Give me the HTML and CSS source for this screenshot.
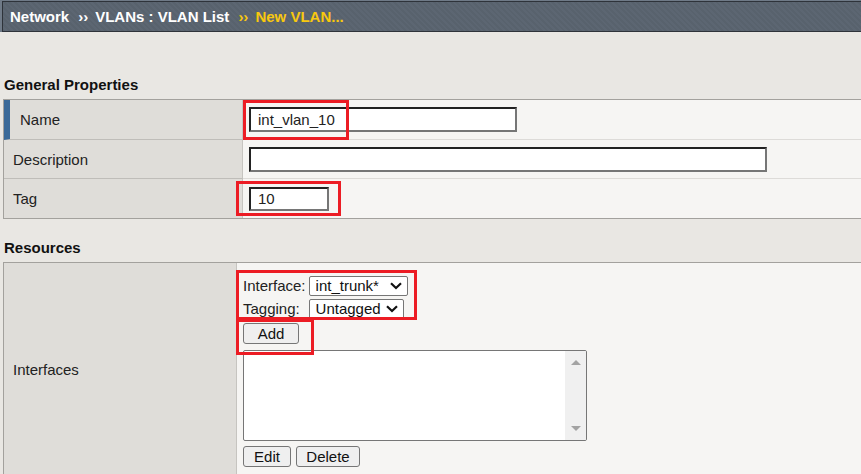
FILE: index.html
```html
<!DOCTYPE html>
<html>
<head>
<meta charset="utf-8">
<link rel="stylesheet" href="styles.css">
</head>
<body>
<div class="topbar">
  <div class="crumbs">
    <span class="crumb">Network</span><span class="sep">››</span><span class="crumb">VLANs : VLAN List</span><span class="sep cur">››</span><span class="crumb cur">New VLAN...</span>
  </div>
</div>

<h2 class="section first">General Properties</h2>
<div class="props">
  <div class="row r1">
    <div class="label active">Name</div>
    <div class="field"><input class="text w-name" type="text" value="int_vlan_10"></div>
  </div>
  <div class="row">
    <div class="label">Description</div>
    <div class="field"><input class="text w-desc" type="text" value=""></div>
  </div>
  <div class="row last">
    <div class="label">Tag</div>
    <div class="field"><input class="text w-tag" type="text" value="10"></div>
  </div>
</div>

<h2 class="section">Resources</h2>
<div class="props res">
  <div class="row tall">
    <div class="label">Interfaces</div>
    <div class="field stack">
      <div class="pairs">
        <span class="lbl">Interface:</span>
        <span class="sel w-if"><select><option>int_trunk*</option></select><svg class="chev" viewBox="0 0 12 8" width="12" height="8"><path d="M1 1.2 L6 6 L11 1.2" fill="none" stroke="#111" stroke-width="2.2"/></svg></span>
        <span class="lbl">Tagging:</span>
        <span class="sel w-tg"><select><option>Untagged</option></select><svg class="chev" viewBox="0 0 12 8" width="12" height="8"><path d="M1 1.2 L6 6 L11 1.2" fill="none" stroke="#111" stroke-width="2.2"/></svg></span>
      </div>
      <div><button class="btn w-add">Add</button></div>
      <div class="listbox">
        <div class="list-body"></div>
        <div class="scroll"><span class="tri up"></span><span class="tri down"></span></div>
      </div>
      <div class="btnrow"><button class="btn w-edit">Edit</button><button class="btn w-del">Delete</button></div>
    </div>
  </div>
</div>

<div class="mark m-name"></div>
<div class="mark m-tag"></div>
<div class="mark m-if"></div>
<div class="mark m-add"></div>
</body>
</html>
```

FILE: styles.css
```css
html, body {
  margin: 0;
  padding: 0;
}
body {
  background: #e9e7e3;
  font-family: "Liberation Sans", Arial, sans-serif;
  font-size: 15px;
  color: #222;
  overflow: hidden;
  height: 474px;
}
.topbar {
  background: #6f7a87;
  padding: 1px 0 0 2px;
}
.crumbs {
  height: 29px;
  border-top: 1px solid #2e333a;
  border-bottom: 1px solid #2e333a;
  border-left: 1px solid #2e333a;
  background: repeating-linear-gradient(45deg, #58626d 0 2px, #5c6672 2px 4px);
  display: flex;
  align-items: center;
  padding-left: 7px;
  font-weight: bold;
  font-size: 15px;
  color: #fff;
}
.crumb { color: #fff; }
.sep {
  color: #fff;
  margin: 0 7px 0 9px;
  font-size: 15px;
}
.cur { color: #f8c80f; }

.section {
  margin: 45px 0 6px 0;
  padding-left: 4px;
  font-size: 15px;
  line-height: 16px;
  font-weight: bold;
  color: #111;
}
.section:not(.first) {
  margin-top: 21px;
}

.props {
  margin-left: 3px;
  border-top: 1px solid #a3a19d;
  border-bottom: 1px solid #a3a19d;
  border-left: 1px solid #a3a19d;
}
.props.res { border-bottom: none; }
.row {
  display: grid;
  grid-template-columns: 239px 1fr;
  height: 39px;
}
.row.r1 { height: 40px; }
.label {
  background: #dfddd9;
  border-right: 1px solid #c6c4c0;
  border-bottom: 1px solid #bfbdb9;
  box-sizing: border-box;
  padding-left: 9px;
  display: flex;
  align-items: center;
}
.label.active {
  border-left: 6px solid #3b6a99;
  padding-left: 10px;
}
.field {
  background: #f6f5f3;
  border-bottom: 1px solid #dddbd8;
  box-sizing: border-box;
  padding-left: 6px;
  display: flex;
  align-items: center;
}
.row.last .label, .row.last .field { border-bottom: none; }

.text {
  box-sizing: border-box;
  height: 25px;
  border-style: solid;
  border-width: 2px;
  border-color: #222 #767676 #767676 #222;
  background: #fff;
  font-family: "Liberation Sans", Arial, sans-serif;
  font-size: 15px;
  color: #222;
  padding: 0 0 0 7px;
  margin: 0;
  outline: none;
}
.w-name { width: 268px; }
.w-desc { width: 518px; }
.w-tag { width: 80px; height: 24px; }

/* resources */
.res .row.tall {
  height: auto;
  grid-template-columns: 233px 1fr;
}
.res .label { border-bottom: none; }
.res .field { border-bottom: none; }
.stack {
  flex-direction: column;
  align-items: flex-start;
  padding: 13px 0 8px 6px;
  gap: 0;
}
.pairs {
  display: grid;
  grid-template-columns: auto auto;
  column-gap: 3px;
  row-gap: 3px;
  align-items: center;
  justify-items: start;
  font-size: 15px;
  line-height: 20px;
}
.lbl { color: #222; }
.sel {
  position: relative;
  display: block;
}
.sel select {
  appearance: none;
  -webkit-appearance: none;
  display: block;
  box-sizing: border-box;
  height: 20px;
  border: 1px solid #767676;
  border-radius: 2px;
  background: #fff;
  font-family: "Liberation Sans", Arial, sans-serif;
  font-size: 15px;
  color: #111;
  padding: 0 0 0 6px;
  margin: 0;
  line-height: 18px;
}
.w-if select { width: 99px; }
.w-tg select { width: 95px; }
.chev {
  position: absolute;
  right: 6px;
  top: 6px;
  pointer-events: none;
}
.btn {
  box-sizing: border-box;
  height: 21px;
  background: #efefef;
  border: 1px solid #767676;
  border-radius: 3px;
  font-family: "Liberation Sans", Arial, sans-serif;
  font-size: 15px;
  color: #111;
  padding: 0;
  margin: 0;
}
.w-add { width: 56px; margin-top: 4px; }
.listbox {
  margin-top: 6px;
  width: 344px;
  height: 91px;
  box-sizing: border-box;
  border: 1px solid #767676;
  border-radius: 2px;
  background: #fff;
  display: flex;
  overflow: hidden;
}
.list-body { flex: 1; }
.scroll {
  width: 21px;
  background: #f0f0f0;
  display: flex;
  flex-direction: column;
  justify-content: space-between;
  align-items: center;
  padding: 9px 0 9px 0;
}
.tri {
  width: 0;
  height: 0;
  border-left: 5px solid transparent;
  border-right: 5px solid transparent;
}
.tri.up { border-bottom: 5px solid #a3a3a3; }
.tri.down { border-top: 5px solid #a3a3a3; }
.btnrow {
  margin-top: 5px;
  display: flex;
  gap: 5px;
}
.w-edit { width: 48px; }
.w-del { width: 64px; }

/* annotation boxes */
.mark {
  position: absolute;
  box-sizing: border-box;
  border: 3px solid #ec1c24;
}
.m-name { left: 243px; top: 100px; width: 106px; height: 40px; }
.m-tag { left: 236px; top: 181px; width: 105px; height: 35px; }
.m-if { left: 236px; top: 270px; width: 181px; height: 50px; }
.m-add { left: 236px; top: 319px; width: 78px; height: 36px; }
```
